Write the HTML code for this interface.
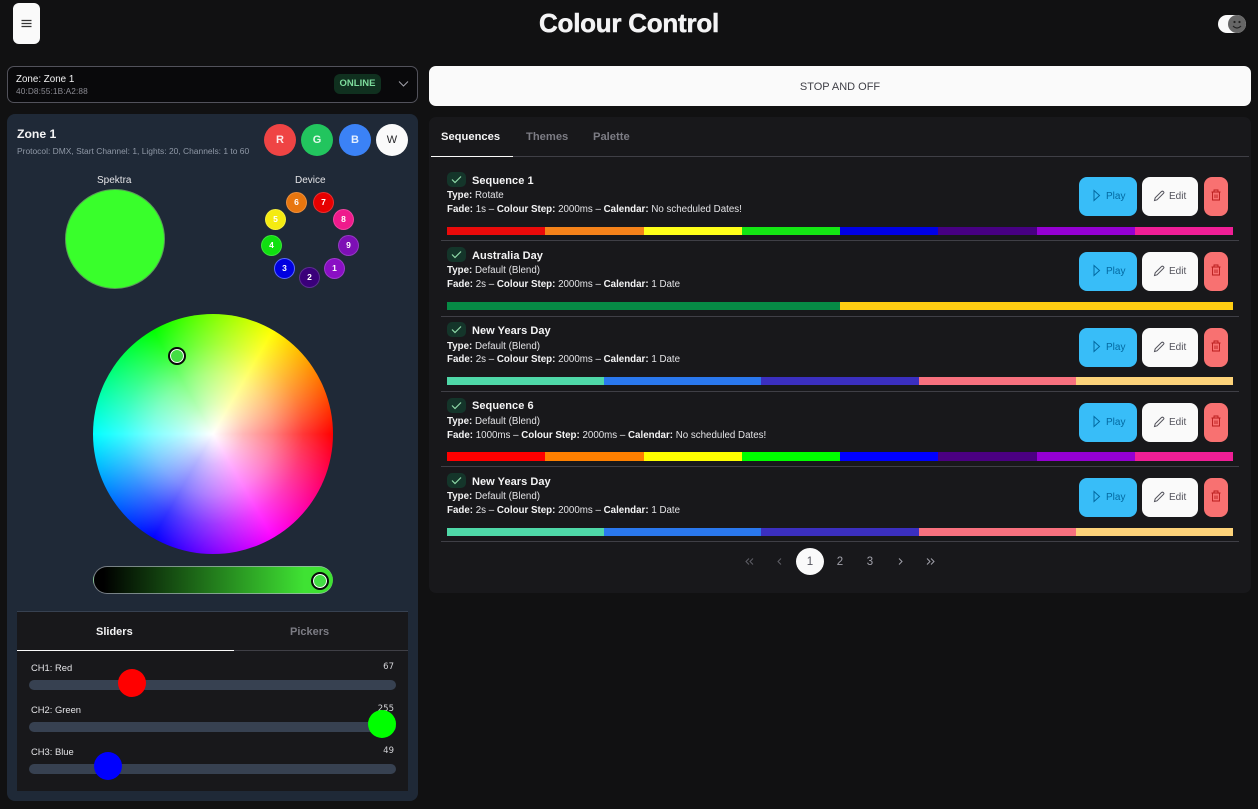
<!DOCTYPE html>
<html><head><meta charset="utf-8"><title>Colour Control</title>
<style>
*{box-sizing:border-box}
html,body{margin:0;padding:0;width:1258px;height:809px;overflow:hidden;background:#111112;font-family:"Liberation Sans",sans-serif;color:#f4f4f5}
.a,.t{position:absolute}
.t{white-space:nowrap;line-height:14px}
.c{border-radius:50%;text-align:center;font-weight:700}
.d{width:21px;height:21px;line-height:19px;font-size:8.5px;border:1px solid rgba(255,255,255,.18);color:#fff}
.bar{position:absolute;left:447px;width:786px;height:8px;display:flex}
.bar i{flex:1;display:block}
.hr{position:absolute;left:441px;width:798px;height:1px;background:#3f3f46}
.chk{position:absolute;left:447px;width:19px;height:15px;border-radius:5px;background:#14352a}
.ttl{font-size:11px;font-weight:700;left:472px;letter-spacing:.05px}
.ln{font-size:9.75px;left:447px;color:#e4e4e7}
.ln b{color:#f4f4f5}
.btn{position:absolute;height:39px;border-radius:8px}
.play{left:1079px;width:58px;background:#38bdf8;color:#0369a1}
.edit{left:1142px;width:56px;background:#fafafa;color:#52525b}
.del{left:1204px;width:24px;background:#f87171}
.btn span{position:absolute;top:13px;font-size:10px;line-height:14px}
.btn svg{position:absolute;fill:none}
.trk{position:absolute;left:29px;width:367px;height:10px;border-radius:5px;background:#374151}
.thm{position:absolute;width:28px;height:28px;border-radius:50%}
.lbl{font-size:9.4px;color:#e4e4e7;left:31px}
.val{font-size:8.5px;color:#d4d4d8;font-family:"DejaVu Sans",sans-serif;right:864px}
.pg{font-size:11.5px;color:#a1a1aa;text-align:center;width:28px;line-height:14px}
.sel{position:absolute;width:18px;height:18px;border-radius:50%;background:#44dd44;border:2px solid #0a0a0a;box-shadow:inset 0 0 0 1px #fff}
</style></head><body>

<div class="a" style="left:13px;top:3px;width:27px;height:41px;background:#fafafa;border-radius:6px"></div>
<svg class="a" style="left:21px;top:19px" width="11" height="10"><path d="M0.5 1.5H10.5M0.5 4.5H10.5M0.5 7.5H10.5" stroke="#333" stroke-width="1.2"/></svg>
<div class="t" style="left:0;width:1258px;text-align:center;top:9px;font-size:26px;line-height:29px;font-weight:700;letter-spacing:-.25px;color:#f4f4f5;-webkit-text-stroke:.5px #f4f4f5">Colour Control</div>

<div class="a" style="left:1218px;top:15px;width:28px;height:18px;border-radius:9px;background:#fafafa"></div>
<div class="a" style="left:1228px;top:15px;width:18px;height:18px;border-radius:50%;background:#666"></div>
<svg class="a" style="left:1228px;top:15px" width="18" height="18"><circle cx="6.5" cy="7" r="1.1" fill="#222"/><circle cx="11.5" cy="7" r="1.1" fill="#222"/><path d="M5 11Q9 15 13 11" stroke="#222" fill="none" stroke-width="1.1"/></svg>

<!-- Zone select -->
<div class="a" style="left:7px;top:66px;width:411px;height:37px;background:#09090b;border:1px solid #52525b;border-radius:7px"></div>
<div class="t" style="left:16px;top:73px;font-size:9.8px;color:#f4f4f5">Zone: Zone 1</div>
<div class="t" style="left:16px;top:84px;font-size:8.3px;color:#8b8b93;letter-spacing:.1px">40:D8:55:1B:A2:88</div>
<div class="a" style="left:334px;top:74px;width:47px;height:20px;background:#10301f;border-radius:6px;text-align:center;font-size:9.5px;line-height:20px;font-weight:700;color:#7ddc9c">ONLINE</div>
<svg class="a" style="left:398px;top:80px" width="11" height="8"><path d="M1 1.5L5.5 6L10 1.5" stroke="#a1a1aa" fill="none" stroke-width="1"/></svg>

<!-- Left panel -->
<div class="a" style="left:7px;top:114px;width:411px;height:687px;background:#1f2937;border-radius:8px"></div>
<div class="t" style="left:17px;top:127px;font-size:12.2px;font-weight:700;color:#f4f4f5">Zone 1</div>
<div class="t" style="left:17px;top:144px;font-size:8.45px;color:#8f98a6">Protocol: DMX, Start Channel: 1, Lights: 20, Channels: 1 to 60</div>

<div class="a c" style="left:264px;top:124px;width:32px;height:32px;line-height:32px;font-size:11px;background:#ef4444;color:#fde8e8">R</div>
<div class="a c" style="left:301px;top:124px;width:32px;height:32px;line-height:32px;font-size:11px;background:#22c55e;color:#e3f9eb">G</div>
<div class="a c" style="left:339px;top:124px;width:32px;height:32px;line-height:32px;font-size:11px;background:#3b82f6;color:#e4effe">B</div>
<div class="a c" style="left:376px;top:124px;width:32px;height:32px;line-height:32px;font-size:11px;background:#fafafa;color:#27272a;font-weight:400">W</div>

<div class="t" style="left:97px;top:174px;font-size:10px;color:#e4e4e7">Spektra</div>
<div class="t" style="left:295px;top:174px;font-size:10px;color:#e4e4e7">Device</div>
<div class="a" style="left:65px;top:189px;width:100px;height:100px;border-radius:50%;background:#39ff2b;border:1px solid #5a9a58"></div>

<div class="a c d" style="left:286px;top:192px;background:#e8760f">6</div>
<div class="a c d" style="left:313px;top:192px;background:#e60000">7</div>
<div class="a c d" style="left:333px;top:209px;background:#ef1a8c">8</div>
<div class="a c d" style="left:338px;top:235px;background:#7d0fb5">9</div>
<div class="a c d" style="left:324px;top:258px;background:#8a0fc4">1</div>
<div class="a c d" style="left:299px;top:267px;background:#3a007a">2</div>
<div class="a c d" style="left:274px;top:258px;background:#0000e0;border-color:#5a6aff">3</div>
<div class="a c d" style="left:261px;top:235px;background:#10e010">4</div>
<div class="a c d" style="left:265px;top:209px;background:#f5eb10">5</div>

<!-- Wheel -->
<div class="a" style="left:93px;top:314px;width:240px;height:240px;border-radius:50%;background:radial-gradient(circle closest-side,#fff 0%,rgba(255,255,255,.72) 25%,rgba(255,255,255,.5) 50%,rgba(255,255,255,.22) 75%,rgba(255,255,255,0) 100%),conic-gradient(from 90deg,#f00,#f0f,#00f,#0ff,#0f0,#ff0,#f00)"></div>
<div class="sel" style="left:168px;top:347px"></div>

<!-- Brightness -->
<div class="a" style="left:93px;top:566px;width:240px;height:28px;border-radius:14px;background:linear-gradient(90deg,#000 0%,#000 4%,#3fe233 88%,#3fe233 100%);border:1px solid rgba(170,180,190,.7);border-right:0"></div>
<div class="sel" style="left:311px;top:572px"></div>

<!-- Slider panel -->
<div class="a" style="left:17px;top:611px;width:391px;height:180px;background:#18181b;border-top:1px solid #374151"></div>
<div class="t" style="left:96px;top:625px;font-size:11px;font-weight:700;color:#f4f4f5">Sliders</div>
<div class="t" style="left:290px;top:625px;font-size:11px;font-weight:700;color:#7c7c84">Pickers</div>
<div class="a" style="left:17px;top:650px;width:391px;height:1px;background:#3f3f46"></div>
<div class="a" style="left:17px;top:650px;width:217px;height:1px;background:#fafafa"></div>

<div class="t lbl" style="top:661px">CH1: Red</div>
<div class="t val" style="top:660px">67</div>
<div class="trk" style="top:680px"></div>
<div class="thm" style="left:118px;top:669px;background:#f00"></div>

<div class="t lbl" style="top:703px">CH2: Green</div>
<div class="t val" style="top:702px">255</div>
<div class="trk" style="top:722px"></div>
<div class="thm" style="left:368px;top:710px;background:#0f0"></div>

<div class="t lbl" style="top:745px">CH3: Blue</div>
<div class="t val" style="top:744px">49</div>
<div class="trk" style="top:764px"></div>
<div class="thm" style="left:94px;top:752px;background:#00f"></div>

<!-- Stop -->
<div class="a" style="left:429px;top:66px;width:822px;height:40px;background:#fafafa;border-radius:7px;text-align:center;font-size:11px;line-height:42px;color:#3f3f46">STOP AND OFF</div>

<!-- Right panel -->
<div class="a" style="left:429px;top:117px;width:822px;height:476px;background:#18181b;border-radius:7px"></div>
<div class="t" style="left:441px;top:130px;font-size:11.2px;font-weight:700;color:#f4f4f5">Sequences</div>
<div class="t" style="left:526px;top:130px;font-size:11.2px;font-weight:700;color:#7c7c84">Themes</div>
<div class="t" style="left:593px;top:130px;font-size:11.2px;font-weight:700;color:#7c7c84">Palette</div>
<div class="a" style="left:431px;top:156px;width:818px;height:1px;background:#3f3f46"></div>
<div class="a" style="left:431px;top:156px;width:82px;height:1px;background:#fafafa"></div>

<!-- Row 1 -->
<div class="chk" style="top:172px"></div>
<svg class="a" style="left:451px;top:175px" width="11" height="9"><path d="M1 4.5L4 7.5L10 1.5" stroke="#8fd9a8" fill="none" stroke-width="1.2"/></svg>
<div class="t ttl" style="top:174px">Sequence 1</div>
<div class="t ln" style="top:189px"><b>Type:</b> Rotate</div>
<div class="t ln" style="top:203px"><b>Fade:</b> 1s – <b>Colour Step:</b> 2000ms – <b>Calendar:</b> No scheduled Dates!</div>
<div class="btn play" style="top:177px"><svg style="left:13px;top:12px" width="9" height="13"><path d="M2 1.5L7.5 6.5L2 11.5Z" stroke="#0369a1"/></svg><span style="left:27px">Play</span></div>
<div class="btn edit" style="top:177px"><svg style="left:11px;top:13px" width="12" height="12"><path d="M1.5 10.5L2.2 7.8L8.5 1.5Q9.5 0.8 10.5 1.7T10.3 3.5L4 9.8Z" stroke="#52525b"/></svg><span style="left:27px">Edit</span></div>
<div class="btn del" style="top:177px"><svg style="left:7px;top:12px" width="10" height="12"><path d="M0.5 3H9.5M3 3V1H7V3M1.5 3V11H8.5V3M4 5.5V9M6 5.5V9" stroke="#b91c1c" stroke-width=".9"/></svg></div>
<div class="bar" style="top:227px"><i style="background:#ea0a0a"></i><i style="background:#f5821a"></i><i style="background:#ffff1a"></i><i style="background:#14e614"></i><i style="background:#0000e6"></i><i style="background:#470082"></i><i style="background:#9400d3"></i><i style="background:#f01e96"></i></div>
<div class="hr" style="top:240px"></div>

<!-- Row 2 -->
<div class="chk" style="top:247px"></div>
<svg class="a" style="left:451px;top:250px" width="11" height="9"><path d="M1 4.5L4 7.5L10 1.5" stroke="#8fd9a8" fill="none" stroke-width="1.2"/></svg>
<div class="t ttl" style="top:249px">Australia Day</div>
<div class="t ln" style="top:264px"><b>Type:</b> Default (Blend)</div>
<div class="t ln" style="top:278px"><b>Fade:</b> 2s – <b>Colour Step:</b> 2000ms – <b>Calendar:</b> 1 Date</div>
<div class="btn play" style="top:252px"><svg style="left:13px;top:12px" width="9" height="13"><path d="M2 1.5L7.5 6.5L2 11.5Z" stroke="#0369a1"/></svg><span style="left:27px">Play</span></div>
<div class="btn edit" style="top:252px"><svg style="left:11px;top:13px" width="12" height="12"><path d="M1.5 10.5L2.2 7.8L8.5 1.5Q9.5 0.8 10.5 1.7T10.3 3.5L4 9.8Z" stroke="#52525b"/></svg><span style="left:27px">Edit</span></div>
<div class="btn del" style="top:252px"><svg style="left:7px;top:12px" width="10" height="12"><path d="M0.5 3H9.5M3 3V1H7V3M1.5 3V11H8.5V3M4 5.5V9M6 5.5V9" stroke="#b91c1c" stroke-width=".9"/></svg></div>
<div class="bar" style="top:302px"><i style="background:#068a45"></i><i style="background:#ffcd12"></i></div>
<div class="hr" style="top:316px"></div>

<!-- Row 3 -->
<div class="chk" style="top:322px"></div>
<svg class="a" style="left:451px;top:325px" width="11" height="9"><path d="M1 4.5L4 7.5L10 1.5" stroke="#8fd9a8" fill="none" stroke-width="1.2"/></svg>
<div class="t ttl" style="top:324px">New Years Day</div>
<div class="t ln" style="top:340px"><b>Type:</b> Default (Blend)</div>
<div class="t ln" style="top:353px"><b>Fade:</b> 2s – <b>Colour Step:</b> 2000ms – <b>Calendar:</b> 1 Date</div>
<div class="btn play" style="top:328px"><svg style="left:13px;top:12px" width="9" height="13"><path d="M2 1.5L7.5 6.5L2 11.5Z" stroke="#0369a1"/></svg><span style="left:27px">Play</span></div>
<div class="btn edit" style="top:328px"><svg style="left:11px;top:13px" width="12" height="12"><path d="M1.5 10.5L2.2 7.8L8.5 1.5Q9.5 0.8 10.5 1.7T10.3 3.5L4 9.8Z" stroke="#52525b"/></svg><span style="left:27px">Edit</span></div>
<div class="btn del" style="top:328px"><svg style="left:7px;top:12px" width="10" height="12"><path d="M0.5 3H9.5M3 3V1H7V3M1.5 3V11H8.5V3M4 5.5V9M6 5.5V9" stroke="#b91c1c" stroke-width=".9"/></svg></div>
<div class="bar" style="top:377px"><i style="background:#4fd8a8"></i><i style="background:#2a78ee"></i><i style="background:#3b2fc0"></i><i style="background:#f8717f"></i><i style="background:#fdd37a"></i></div>
<div class="hr" style="top:391px"></div>

<!-- Row 4 -->
<div class="chk" style="top:398px"></div>
<svg class="a" style="left:451px;top:401px" width="11" height="9"><path d="M1 4.5L4 7.5L10 1.5" stroke="#8fd9a8" fill="none" stroke-width="1.2"/></svg>
<div class="t ttl" style="top:399px">Sequence 6</div>
<div class="t ln" style="top:415px"><b>Type:</b> Default (Blend)</div>
<div class="t ln" style="top:429px"><b>Fade:</b> 1000ms – <b>Colour Step:</b> 2000ms – <b>Calendar:</b> No scheduled Dates!</div>
<div class="btn play" style="top:403px"><svg style="left:13px;top:12px" width="9" height="13"><path d="M2 1.5L7.5 6.5L2 11.5Z" stroke="#0369a1"/></svg><span style="left:27px">Play</span></div>
<div class="btn edit" style="top:403px"><svg style="left:11px;top:13px" width="12" height="12"><path d="M1.5 10.5L2.2 7.8L8.5 1.5Q9.5 0.8 10.5 1.7T10.3 3.5L4 9.8Z" stroke="#52525b"/></svg><span style="left:27px">Edit</span></div>
<div class="btn del" style="top:403px"><svg style="left:7px;top:12px" width="10" height="12"><path d="M0.5 3H9.5M3 3V1H7V3M1.5 3V11H8.5V3M4 5.5V9M6 5.5V9" stroke="#b91c1c" stroke-width=".9"/></svg></div>
<div class="bar" style="top:452px;height:9px"><i style="background:#f00"></i><i style="background:#ff8000"></i><i style="background:#ff0"></i><i style="background:#0f0"></i><i style="background:#00f"></i><i style="background:#4b0082"></i><i style="background:#9400d3"></i><i style="background:#f01e96"></i></div>
<div class="hr" style="top:466px"></div>

<!-- Row 5 -->
<div class="chk" style="top:473px"></div>
<svg class="a" style="left:451px;top:476px" width="11" height="9"><path d="M1 4.5L4 7.5L10 1.5" stroke="#8fd9a8" fill="none" stroke-width="1.2"/></svg>
<div class="t ttl" style="top:475px">New Years Day</div>
<div class="t ln" style="top:490px"><b>Type:</b> Default (Blend)</div>
<div class="t ln" style="top:504px"><b>Fade:</b> 2s – <b>Colour Step:</b> 2000ms – <b>Calendar:</b> 1 Date</div>
<div class="btn play" style="top:478px"><svg style="left:13px;top:12px" width="9" height="13"><path d="M2 1.5L7.5 6.5L2 11.5Z" stroke="#0369a1"/></svg><span style="left:27px">Play</span></div>
<div class="btn edit" style="top:478px"><svg style="left:11px;top:13px" width="12" height="12"><path d="M1.5 10.5L2.2 7.8L8.5 1.5Q9.5 0.8 10.5 1.7T10.3 3.5L4 9.8Z" stroke="#52525b"/></svg><span style="left:27px">Edit</span></div>
<div class="btn del" style="top:478px"><svg style="left:7px;top:12px" width="10" height="12"><path d="M0.5 3H9.5M3 3V1H7V3M1.5 3V11H8.5V3M4 5.5V9M6 5.5V9" stroke="#b91c1c" stroke-width=".9"/></svg></div>
<div class="bar" style="top:528px"><i style="background:#4fd8a8"></i><i style="background:#2a78ee"></i><i style="background:#3b2fc0"></i><i style="background:#f8717f"></i><i style="background:#fdd37a"></i></div>
<div class="hr" style="top:541px"></div>

<!-- Pagination -->
<div class="a" style="left:796px;top:548px;width:28px;height:27px;border-radius:50%;background:#fafafa"></div>
<svg class="a" style="left:745px;top:558px" width="9" height="7"><path d="M4 0.5L1 3.5L4 6.5M8 0.5L5 3.5L8 6.5" stroke="#5f5f67" fill="none" stroke-width="1"/></svg>
<svg class="a" style="left:777px;top:558px" width="5" height="7"><path d="M4 0.5L1 3.5L4 6.5" stroke="#5f5f67" fill="none" stroke-width="1"/></svg>
<div class="t pg" style="left:796px;top:555px;color:#52525b">1</div>
<div class="t pg" style="left:826px;top:555px">2</div>
<div class="t pg" style="left:856px;top:555px">3</div>
<svg class="a" style="left:898px;top:558px" width="5" height="7"><path d="M1 0.5L4 3.5L1 6.5" stroke="#a1a1aa" fill="none" stroke-width="1"/></svg>
<svg class="a" style="left:926px;top:558px" width="9" height="7"><path d="M1 0.5L4 3.5L1 6.5M5 0.5L8 3.5L5 6.5" stroke="#a1a1aa" fill="none" stroke-width="1"/></svg>

</body></html>
